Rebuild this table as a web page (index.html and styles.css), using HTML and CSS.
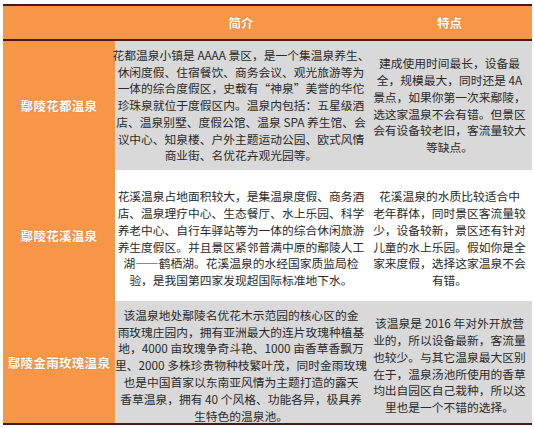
FILE: index.html
```html
<!DOCTYPE html>
<html lang="zh-CN">
<head>
<meta charset="utf-8">
<title>鄢陵温泉</title>
<link rel="stylesheet" href="styles.css">
</head>
<body>
<div class="table">
  <div class="cell head"></div>
  <div class="cell head title">简介</div>
  <div class="cell head title">特点</div>

  <div class="cell label">鄢陵花都温泉</div>
  <div class="cell text gray r1">
    <span>花都温泉小镇是 AAAA 景区，是一个集温泉养生、</span>
    <span>休闲度假、住宿餐饮、商务会议、观光旅游等为</span>
    <span>一体的综合度假区，史载有“神泉”美誉的华佗</span>
    <span>珍珠泉就位于度假区内。温泉内包括：五星级酒</span>
    <span>店、温泉别墅、度假公馆、温泉 SPA 养生馆、会</span>
    <span>议中心、知泉楼、户外主题运动公园、欧式风情</span>
    <span>商业街、名优花卉观光园等。</span>
  </div>
  <div class="cell text gray r1">
    <span>建成使用时间最长，设备最</span>
    <span>全，规模最大，同时还是 4A</span>
    <span>景点，如果你第一次来鄢陵，</span>
    <span>选这家温泉不会有错。但景区</span>
    <span>会有设备较老旧，客流量较大</span>
    <span>等缺点。</span>
  </div>

  <div class="cell label">鄢陵花溪温泉</div>
  <div class="cell text white r2">
    <span>花溪温泉占地面积较大，是集温泉度假、商务酒</span>
    <span>店、温泉理疗中心、生态餐厅、水上乐园、科学</span>
    <span>养老中心、自行车驿站等为一体的综合休闲旅游</span>
    <span>养生度假区。并且景区紧邻普满中原的鄢陵人工</span>
    <span>湖——鹤栖湖。花溪温泉的水经国家质监局检</span>
    <span>验，是我国第四家发现超国际标准地下水。</span>
  </div>
  <div class="cell text white r2">
    <span>花溪温泉的水质比较适合中</span>
    <span>老年群体，同时景区客流量较</span>
    <span>少，设备较新，景区还有针对</span>
    <span>儿童的水上乐园。假如你是全</span>
    <span>家来度假，选择这家温泉不会</span>
    <span>有错。</span>
  </div>

  <div class="cell label">鄢陵金雨玫瑰温泉</div>
  <div class="cell text gray r3">
    <span>该温泉地处鄢陵名优花木示范园的核心区的金</span>
    <span>雨玫瑰庄园内，拥有亚洲最大的连片玫瑰种植基</span>
    <span>地，4000 亩玫瑰争奇斗艳、1000 亩香草香飘万</span>
    <span>里、2000 多株珍贵物种枝繁叶茂，同时金雨玫瑰</span>
    <span>也是中国首家以东南亚风情为主题打造的露天</span>
    <span>香草温泉，拥有 40 个风格、功能各异，极具养</span>
    <span>生特色的温泉池。</span>
  </div>
  <div class="cell text gray r3">
    <span>该温泉是 2016 年对外开放营</span>
    <span>业的，所以设备最新，客流量</span>
    <span>也较少。与其它温泉最大区别</span>
    <span>在于，温泉汤池所使用的香草</span>
    <span>均出自园区自己栽种，所以这</span>
    <span>里也是一个不错的选择。</span>
  </div>
</div>
</body>
</html>
```
FILE: styles.css
```css
html, body {
  margin: 0;
  padding: 0;
  background: #ffffff;
}

body {
  font-family: "Noto Sans CJK SC", "Noto Sans", sans-serif;
  color: #2a2a2a;
}

.table {
  margin: 4px 0 0 3px;
  width: 529px;
  display: grid;
  grid-template-columns: 112px 252px 165px;
  grid-template-rows: 35px 129px 131px 122px;
  border-top: 2px solid #4a1b1b;
  border-bottom: 2px solid #4a1b1b;
}

.cell {
  display: flex;
  flex-direction: column;
  justify-content: center;
  align-items: center;
  min-width: 0;
}

.head {
  background: #f79646;
  border-bottom: 2px solid #4a1b1b;
}

.title {
  color: #ffffff;
  font-weight: bold;
  font-size: 12.5px;
  text-shadow: 0 0 1px rgba(140, 70, 10, 0.6);
}

.label {
  background: #f79646;
  color: #ffffff;
  font-weight: bold;
  font-size: 12.5px;
  letter-spacing: 0.3px;
  text-shadow: 0 0 1px rgba(140, 70, 10, 0.6);
}

.text {
  font-size: 11.75px;
  line-height: 16.8px;
  text-align: center;
}

.text span {
  white-space: nowrap;
}

.gray {
  background: #d9d9d9;
}

.white {
  background: #ffffff;
}

.r2 {
  padding-top: 6px;
}

.r3 {
  padding-top: 7px;
}
```
